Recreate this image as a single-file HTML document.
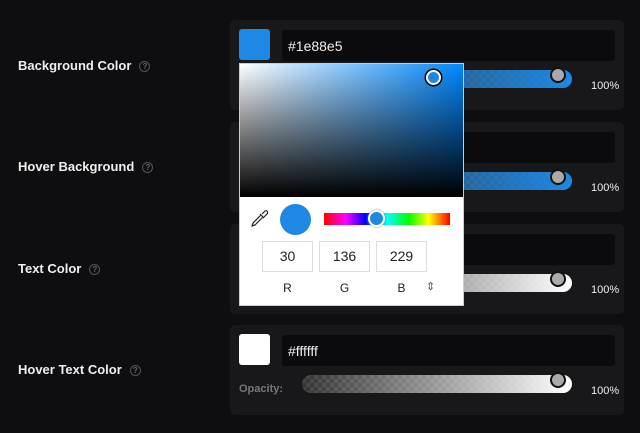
<!DOCTYPE html>
<html><head><style>
*{box-sizing:border-box;margin:0;padding:0}
body{width:640px;height:433px;background:#0e0e10;font-family:"Liberation Sans",sans-serif;position:relative;overflow:hidden}
.lab{position:absolute;left:18px;color:#eee;font-weight:bold;font-size:13px}
.q{display:inline-block;width:11px;height:11px;border:1.3px solid #555;border-radius:50%;color:#666;font-size:8px;text-align:center;line-height:9px;margin-left:8px;vertical-align:1px}
.card{position:absolute;left:230px;width:394px;height:90px;background:#18181b;border-radius:5px}
.sw{position:absolute;left:9px;top:9px;width:31px;height:31px;border-radius:3px}
.hex{position:absolute;left:52px;top:10px;width:333px;height:31px;background:#0b0b0d;border-radius:3px;color:#eee;font-size:14px;padding:8px 6px}
.op{position:absolute;left:9px;top:58px;color:#777;font-size:11px;font-weight:bold}
.tr{position:absolute;left:72px;top:50px;width:270px;height:18px;border-radius:9px;background-color:#333;background-image:linear-gradient(45deg,#444 25%,transparent 25%,transparent 75%,#444 75%),linear-gradient(45deg,#444 25%,transparent 25%,transparent 75%,#444 75%);background-size:8px 8px;background-position:0 0,4px 4px;overflow:hidden}
.tr i{position:absolute;inset:0}
.th{position:absolute;left:320px;top:47px;width:16px;height:16px;border-radius:50%;background:#aaa;border:2px solid #111}
.pc{position:absolute;left:361px;top:60px;color:#eee;font-size:11px}
</style></head><body>
<div class="lab" style="top:58px">Background Color<span class="q">?</span></div>
<div class="lab" style="top:159px">Hover Background<span class="q">?</span></div>
<div class="lab" style="top:261px">Text Color<span class="q">?</span></div>
<div class="lab" style="top:362px">Hover Text Color<span class="q">?</span></div>

<div class="card" style="top:20px"><div class="sw" style="background:#1e88e5"></div><div class="hex">#1e88e5</div><div class="tr"><i style="background:linear-gradient(90deg,rgba(30,136,229,0),#1e88e5)"></i></div><div class="th"></div><div class="pc">100%</div></div>
<div class="card" style="top:122px"><div class="sw" style="background:#1e88e5"></div><div class="hex"></div><div class="tr"><i style="background:linear-gradient(90deg,rgba(30,136,229,0),#1e88e5)"></i></div><div class="th"></div><div class="pc">100%</div></div>
<div class="card" style="top:224px"><div class="sw" style="background:#fff"></div><div class="hex"></div><div class="tr"><i style="background:linear-gradient(90deg,rgba(255,255,255,0),#fff)"></i></div><div class="th"></div><div class="pc">100%</div></div>
<div class="card" style="top:325px"><div class="sw" style="background:#fff"></div><div class="hex">#ffffff</div><div class="op">Opacity:</div><div class="tr"><i style="background:linear-gradient(90deg,rgba(255,255,255,0),#fff)"></i></div><div class="th"></div><div class="pc">100%</div></div>

<div style="position:absolute;left:239px;top:63px;width:225px;height:243px;background:#fff;border:1px solid #ccc">
 <div style="position:absolute;left:0;top:0;width:223px;height:133px;background:linear-gradient(to top,#000,rgba(0,0,0,0)),linear-gradient(to right,#fff,#0088ff)"></div>
 <div style="position:absolute;left:186px;top:6px;width:15px;height:15px;border-radius:50%;background:#1e88e5;border:2px solid #fff;box-shadow:0 0 0 1.5px #000"></div>
 <svg style="position:absolute;left:10px;top:144px" width="20" height="20" viewBox="0 0 20 20"><path d="M2 18 L3 15 L11 7 L13 9 L5 17 Z M10 6 L14 10 M12 6 L15 3 Q17 2 17.5 4 Q18 5 17 6 L14 9" stroke="#222" stroke-width="1.2" fill="none" stroke-linejoin="round"/></svg>
 <div style="position:absolute;left:40px;top:140px;width:31px;height:31px;border-radius:50%;background:#1e88e5"></div>
 <div style="position:absolute;left:84px;top:149px;width:126px;height:12px;background:linear-gradient(90deg,#f00,#f0f 17%,#00f 33%,#0ff 50%,#0f0 67%,#ff0 83%,#f00)"></div>
 <div style="position:absolute;left:128px;top:146px;width:17px;height:17px;border-radius:50%;background:#1e88e5;border:2px solid #fff;box-shadow:0 0 2px #888"></div>
 <div style="position:absolute;left:22px;top:177px;width:51px;height:31px;border:1px solid #ddd;text-align:center;font-size:14px;line-height:29px;color:#222">30</div>
 <div style="position:absolute;left:79px;top:177px;width:51px;height:31px;border:1px solid #ddd;text-align:center;font-size:14px;line-height:29px;color:#222">136</div>
 <div style="position:absolute;left:136px;top:177px;width:51px;height:31px;border:1px solid #ddd;text-align:center;font-size:14px;line-height:29px;color:#222">229</div>
 <div style="position:absolute;left:22px;top:217px;width:51px;text-align:center;font-size:12px;color:#222">R</div>
 <div style="position:absolute;left:79px;top:217px;width:51px;text-align:center;font-size:12px;color:#222">G</div>
 <div style="position:absolute;left:136px;top:217px;width:51px;text-align:center;font-size:12px;color:#222">B</div>
 <div style="position:absolute;left:186px;top:216px;font-size:11px;color:#555">⇕</div>
</div>
</body></html>
